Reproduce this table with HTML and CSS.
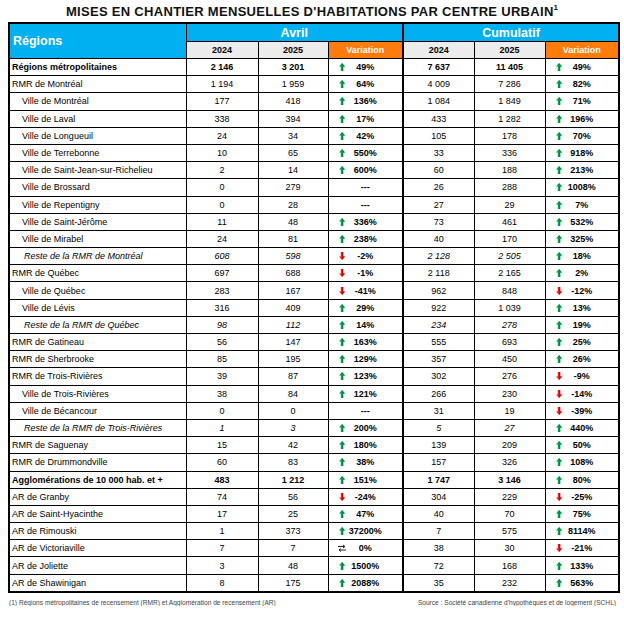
FILE: index.html
```html
<!DOCTYPE html>
<html lang="fr">
<head>
<meta charset="utf-8">
<link rel="stylesheet" href="styles.css">
<title>Mises en chantier</title>
</head>
<body>
<div class="page">
  <h1 class="title">MISES EN CHANTIER MENSUELLES D'HABITATIONS PAR CENTRE URBAIN<sup>1</sup></h1>
  <table class="tbl">
    <colgroup>
      <col class="c-reg"><col class="c-n1"><col class="c-n2"><col class="c-v1"><col class="c-n3"><col class="c-n4"><col class="c-v2">
    </colgroup>
    <thead>
      <tr class="h1">
        <th rowspan="2" class="th-reg">Régions</th>
        <th colspan="3" class="th-grp sep-r">Avril</th>
        <th colspan="3" class="th-grp">Cumulatif</th>
      </tr>
      <tr class="h2">
        <th class="th-yr">2024</th><th class="th-yr">2025</th><th class="th-var sep-r">Variation</th>
        <th class="th-yr">2024</th><th class="th-yr">2025</th><th class="th-var">Variation</th>
      </tr>
    </thead>
    <tbody id="body"></tbody>
  </table>
  <div class="foot">
    <span>(1) Régions métropolitaines de recensement (RMR) et Agglomération de recensement (AR)</span>
    <span>Source : Société canadienne d'hypothèques et de logement (SCHL)</span>
  </div>
</div>
<script src="app.js"></script>
</body>
</html>
```
FILE: styles.css
```css
html, body { margin: 0; padding: 0; background: #fff; }
.page { width: 624px; font-family: "Liberation Sans", Arial, sans-serif; color: #000; }
.title {
  margin: 0; padding-top: 4px; height: 18px;
  font-size: 13px; font-weight: bold; text-align: center; letter-spacing: 0.3px;
  line-height: 16px; color: #111;
}
.title sup { font-size: 8px; line-height: 0; vertical-align: 6px; letter-spacing: 0; }
.tbl {
  margin-left: 8px; width: 610px; table-layout: fixed; border-collapse: collapse;
  border: 2px solid #000; font-size: 9px;
}
.c-reg { width: 177px; } .c-n1 { width: 72px; } .c-n2 { width: 70px; } .c-v1 { width: 75px; }
.c-n3 { width: 71px; } .c-n4 { width: 71px; } .c-v2 { width: 74px; }
.tbl th, .tbl td { border: 1px solid #000; padding: 0; white-space: nowrap; overflow: hidden; }
.h1 th { height: 17px; }
.h2 th { height: 16px; }
.th-reg { background: #00b0f0; color: #fff; font-size: 12.5px; text-align: left; padding-left: 3px !important; vertical-align: middle; }
.th-grp { background: #00b0f0; color: #fff; font-size: 12.5px; text-align: center; }
.th-yr { background: #ececec; font-size: 9px; text-align: center; }
.th-var { background: #ff7c0c; color: #fff; font-size: 9px; text-align: center; }
.sep-r { border-right: 2px solid #000 !important; }
.tbl td { height: 16.2px; text-align: center; line-height: 10px; }
.tbl td.name { text-align: left; padding-left: 2px; }
.tbl td.name.ind { padding-left: 12px; }
.tbl td.name.rest { padding-left: 14px; font-style: italic; }
.tbl tr.rest td.num { font-style: italic; }
.tbl tr.tot td { font-weight: bold; }
.tbl td.var { position: relative; font-weight: bold; }
.arrow { position: absolute; left: 10px; top: 50%; margin-top: -4px; width: 6px; height: 8px; display: block; }
.foot {
  display: flex; justify-content: space-between; padding: 6px 8px 0 9px;
  font-size: 6.6px; color: #444;
}
```
FILE: app.js
```js
const rows = [
  ["Régions métropolitaines","2 146","3 201","49%","7 637","11 405","49%","tot"],
  ["RMR de Montréal","1 194","1 959","64%","4 009","7 286","82%",""],
  ["Ville de Montréal","177","418","136%","1 084","1 849","71%","ind"],
  ["Ville de Laval","338","394","17%","433","1 282","196%","ind"],
  ["Ville de Longueuil","24","34","42%","105","178","70%","ind"],
  ["Ville de Terrebonne","10","65","550%","33","336","918%","ind"],
  ["Ville de Saint-Jean-sur-Richelieu","2","14","600%","60","188","213%","ind"],
  ["Ville de Brossard","0","279","---","26","288","1008%","ind"],
  ["Ville de Repentigny","0","28","---","27","29","7%","ind"],
  ["Ville de Saint-Jérôme","11","48","336%","73","461","532%","ind"],
  ["Ville de Mirabel","24","81","238%","40","170","325%","ind"],
  ["Reste de la RMR de Montréal","608","598","-2%","2 128","2 505","18%","rest"],
  ["RMR de Québec","697","688","-1%","2 118","2 165","2%",""],
  ["Ville de Québec","283","167","-41%","962","848","-12%","ind"],
  ["Ville de Lévis","316","409","29%","922","1 039","13%","ind"],
  ["Reste de la RMR de Québec","98","112","14%","234","278","19%","rest"],
  ["RMR de Gatineau","56","147","163%","555","693","25%",""],
  ["RMR de Sherbrooke","85","195","129%","357","450","26%",""],
  ["RMR de Trois-Rivières","39","87","123%","302","276","-9%",""],
  ["Ville de Trois-Rivières","38","84","121%","266","230","-14%","ind"],
  ["Ville de Bécancour","0","0","---","31","19","-39%","ind"],
  ["Reste de la RMR de Trois-Rivières","1","3","200%","5","27","440%","rest"],
  ["RMR de Saguenay","15","42","180%","139","209","50%",""],
  ["RMR de Drummondville","60","83","38%","157","326","108%",""],
  ["Agglomérations de 10 000 hab. et +","483","1 212","151%","1 747","3 146","80%","tot"],
  ["AR de Granby","74","56","-24%","304","229","-25%",""],
  ["AR de Saint-Hyacinthe","17","25","47%","40","70","75%",""],
  ["AR de Rimouski","1","373","37200%","7","575","8114%",""],
  ["AR de Victoriaville","7","7","0%","38","30","-21%",""],
  ["AR de Joliette","3","48","1500%","72","168","133%",""],
  ["AR de Shawinigan","8","175","2088%","35","232","563%",""]
];
const UP = '<svg class="arrow" viewBox="0 0 6 8"><path d="M3 0 L6 3.4 L4.2 3.4 L4.2 8 L1.8 8 L1.8 3.4 L0 3.4 Z" fill="#00a550"/><path d="M3 0 L6 3.4 L4.2 3.4 L4.2 8 L3 8 Z" fill="#008a3e"/></svg>';
const DOWN = '<svg class="arrow" viewBox="0 0 6 8"><path d="M3 8 L6 4.6 L4.2 4.6 L4.2 0 L1.8 0 L1.8 4.6 L0 4.6 Z" fill="#ff1a1a"/><path d="M3 8 L6 4.6 L4.2 4.6 L4.2 0 L3 0 Z" fill="#d40000"/></svg>';
const SIDE = '<svg class="arrow side" viewBox="0 0 8 8" style="width:8px;left:9px"><path d="M0 2.5 H6.5 M5 1 L7 2.5 L5 4" stroke="#222" stroke-width="1" fill="none"/><path d="M8 6 H1.5 M3 4.5 L1 6 L3 7.5" stroke="#222" stroke-width="1" fill="none"/></svg>';
function varCell(v, sep) {
  let icon = '';
  if (v !== '---') {
    if (v === '0%') icon = SIDE;
    else if (v.startsWith('-')) icon = DOWN;
    else icon = UP;
  }
  return '<td class="var' + (sep ? ' sep-r' : '') + '">' + icon + v + '</td>';
}
const body = document.getElementById('body');
body.innerHTML = rows.map(r => {
  const k = r[7];
  const nameCls = 'name' + (k === 'ind' ? ' ind' : '') + (k === 'rest' ? ' rest' : '');
  return '<tr class="' + k + '"><td class="' + nameCls + '">' + r[0] + '</td>' +
    '<td class="num">' + r[1] + '</td><td class="num">' + r[2] + '</td>' + varCell(r[3], true) +
    '<td class="num">' + r[4] + '</td><td class="num">' + r[5] + '</td>' + varCell(r[6], false) + '</tr>';
}).join('');
```
